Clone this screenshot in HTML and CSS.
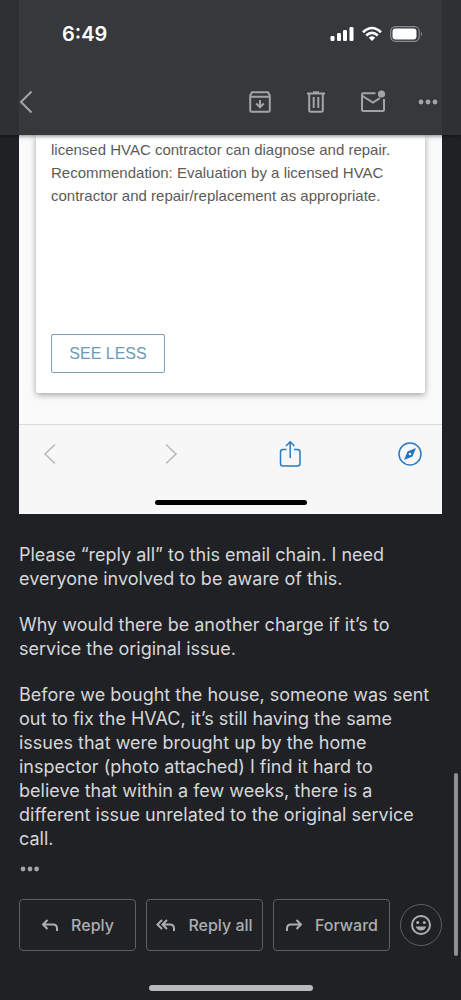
FILE: index.html
```html
<!DOCTYPE html>
<html lang="en">
<head>
<meta charset="utf-8">
<meta name="viewport" content="width=device-width, initial-scale=1">
<title>Email</title>
<link rel="stylesheet" href="styles.css">
</head>
<body>
<header class="top">
  <div class="status">
    <span class="time">6:49</span>
    <div class="signals">
      <svg width="24" height="16" viewBox="0 0 24 16" fill="#fff" aria-hidden="true"><rect x="0.5" y="10" width="4" height="5" rx="1.2"/><rect x="7" y="7" width="4" height="8" rx="1.2"/><rect x="13" y="4" width="4" height="11" rx="1.2"/><rect x="19.500" y="1" width="4" height="14" rx="1.2"/></svg>
      <svg width="20" height="16" viewBox="0 0 20 16" fill="none" stroke="#fff" stroke-width="2.600" aria-hidden="true"><path d="M1 6.200Q10-2.200 19 6.200M4.200 9.500Q10 4.200 15.800 9.500"/><path d="M6.800 11.700Q10 9 13.200 11.700L10 15Z" fill="#fff" stroke="none"/></svg>
      <svg width="33" height="16" viewBox="0 0 33 16" aria-hidden="true"><rect x="0.700" y="0.700" width="28.600" height="14.600" rx="4.700" fill="none" stroke="#8a8b8e" stroke-width="1.200"/><rect x="2.500" y="2.500" width="24" height="11" rx="3" fill="#fff"/><path d="M31 5.500q2 2.500 0 5z" fill="#8a8b8e"/></svg>
    </div>
  </div>
  <nav class="toolbar" aria-label="Message">
    <button class="icon back" aria-label="Back"><svg width="16" height="24" viewBox="0 0 16 24"><path d="M13.500 1.500 3 12l10.500 10.500"/></svg></button>
    <button class="icon" aria-label="Archive"><svg width="24" height="24" viewBox="0 0 24 24"><path d="M2.200 5.500V20.500q0 1.300 1.300 1.300h17q1.300 0 1.300-1.300V5.500L20 2.200H4ZM2.200 6.700h19.600M12 10v7M8.200 13.500l3.800 3.800 3.800-3.800"/></svg></button>
    <button class="icon" aria-label="Delete"><svg width="24" height="24" viewBox="0 0 24 24"><path d="M3 3.500h18M9 2.200h6M5.200 3.500v16.800q0 1.500 1.500 1.500h10.600q1.500 0 1.500-1.500V3.500M9.700 7v11M14.300 7v11"/></svg></button>
    <button class="icon" aria-label="Mark unread"><svg width="26" height="24" viewBox="0 0 26 24"><path d="M15.500 3.200H3.200q-1.200 0-1.200 1.200v15.400q0 1.200 1.200 1.200h19.600q1.200 0 1.200-1.200V9M2.500 6l10.500 6.500 7-4.500"/><circle class="dot" cx="21.500" cy="4" r="3.600"/></svg></button>
    <button class="icon" aria-label="More options"><svg class="dots" width="20" height="24" viewBox="0 0 20 24"><circle cx="3" cy="12" r="2.400"/><circle cx="10" cy="12" r="2.400"/><circle cx="17" cy="12" r="2.400"/></svg></button>
  </nav>
</header>
<main class="message">
  <section class="photo" aria-label="Attached photo">
    <div class="sheet">
      <article class="report">
        <p class="finding">licensed HVAC contractor can diagnose and repair. Recommendation: Evaluation by a licensed HVAC contractor and repair/replacement as appropriate.</p>
        <button class="less">SEE LESS</button>
      </article>
    </div>
    <div class="browser-bar">
      <svg width="26" height="24" viewBox="0 0 26 24" stroke="#b8b8b8"><path d="M18 2.500 8 12l10 9.500"/></svg>
      <svg width="26" height="24" viewBox="0 0 26 24" stroke="#b8b8b8"><path d="M9 2.500 19 12 9 21.500"/></svg>
      <svg width="26" height="28" viewBox="0 0 26 28" stroke="#2b7bc0"><path d="M9.500 9.500h-3.500q-2.500 0-2.500 2.500v11.500q0 2.500 2.500 2.500h14.500q2.500 0 2.500-2.500V12q0-2.500-2.500-2.500h-3.500M13.200 18V2M9 6 13.200 1.800 17.400 6"/></svg>
      <svg width="26" height="26" viewBox="0 0 26 26" stroke="#2b7bc0"><circle cx="13" cy="13" r="11"/><path d="M19 7 15.500 15.500l-8.500 3.500 3.500-8.500Z" fill="#2173c4" stroke="none"/><circle cx="13" cy="13" r="1.300" fill="#f7f7f7" stroke="none"/></svg>
    </div>
    <div class="photo-handle"></div>
  </section>
  <div class="copy">
    <p>Please “reply all” to this email chain. I need everyone involved to be aware of this.</p>
    <p>Why would there be another charge if it’s to service the original issue.</p>
    <p>Before we bought the house, someone was sent out to fix the HVAC, it’s still having the same issues that were brought up by the home inspector (photo attached) I find it hard to believe that within a few weeks, there is a different issue unrelated to the original service call.</p>
  </div>
  <button class="icon quoted" aria-label="Show quoted text"><svg class="dots" width="20" height="8" viewBox="0 0 20 8"><circle cx="4" cy="4" r="2.400"/><circle cx="11" cy="4" r="2.400"/><circle cx="17.600" cy="4" r="2.400"/></svg></button>
  <div class="actions">
    <button class="action"><svg width="18" height="16" viewBox="0 0 18 16"><path d="M6.500 3 2 7.500 6.500 12M2 7.500h10q4 0 4 4V14"/></svg>Reply</button>
    <button class="action"><svg width="20" height="16" viewBox="0 0 20 16"><path d="M6 3 1.500 7.500 6 12M11 3 6.500 7.500 11 12M6.500 7.500H14q4 0 4 4V14"/></svg>Reply all</button>
    <button class="action"><svg width="18" height="16" viewBox="0 0 18 16"><path d="M11.500 3 16 7.500 11.500 12M16 7.500H6q-4 0-4 4V14"/></svg>Forward</button>
    <button class="react" aria-label="Add reaction"><svg width="22" height="22" viewBox="0 0 22 22"><circle cx="11" cy="11" r="9" fill="none" stroke="#adaeb1" stroke-width="2"/><circle cx="7.700" cy="8.500" r="1.500"/><circle cx="14.300" cy="8.500" r="1.500"/><path d="M5.700 12.500h10.600q-1.500 4-5.300 4t-5.300-4z"/></svg></button>
  </div>
</main>
<footer class="home"><div class="home-bar"></div></footer>
<div class="scroll-thumb"></div>
</body>
</html>
```
FILE: styles.css
```css
* { box-sizing: border-box; }
body {
  margin: 0;
  min-height: 100vh;
  position: relative;
  display: flex;
  flex-direction: column;
  background: #202125;
  color: #d6d7d9;
  font-family: Inter, "Liberation Sans", sans-serif;
}
button { margin: 0; padding: 0; background: none; border: 0; font: inherit; color: inherit; }
svg { display: block; flex: none; }
p { margin: 0; }

.top {
  position: relative;
  padding: 22px 23px 21px 18px;
  background: linear-gradient(90deg, #2f3034 19px, #37383c 19px, #37383c calc(100% - 19px), #2f3034 calc(100% - 19px));
  box-shadow: 0 1px 4px rgba(0, 0, 0, .5);
}
.status {
  display: flex;
  justify-content: space-between;
  align-items: center;
  height: 24px;
  padding: 0 15px 0 44px;
}
.time { color: #fff; font-size: 20px; font-weight: 600; line-height: 24px; }
.signals { display: flex; align-items: center; gap: 8px; }
.toolbar { display: flex; align-items: center; gap: 32px; margin-top: 44px; }
.icon svg { fill: none; stroke: #a3a4a8; stroke-width: 2; }
.back { margin-right: auto; }
.icon .dots, .icon .dot { fill: #a3a4a8; stroke: none; }

.message { padding: 0 19px; }
.photo { padding-bottom: 9px; background: #f7f7f7; }
.sheet { padding: 0 17px 31px; background: #fafafa; border-bottom: 1px solid #d9dbda; overflow: hidden; }
.report {
  padding: 3px 15px 20px;
  background: #fff;
  border-radius: 0 0 2px 2px;
  box-shadow: 0 2px 6px rgba(0, 0, 0, .35);
}
.finding { color: #5b5b5b; font-family: "Liberation Sans", Arial, sans-serif; font-size: 15px; line-height: 23px; }
.less {
  margin-top: 127px;
  width: 114px;
  height: 39px;
  border: 1px solid #7d9fb8;
  border-radius: 2px;
  color: #6a9bb8;
  font-family: "Liberation Sans", Arial, sans-serif;
  font-size: 16px;
}
.browser-bar { display: flex; justify-content: space-between; align-items: center; padding: 15px 19px 0 18px; }
.browser-bar svg { fill: none; stroke-width: 1.5; }
.photo-handle { width: 152px; height: 5px; margin: 32px auto 0; border-radius: 3px; background: #000; }

.copy {
  display: flex;
  flex-direction: column;
  gap: 22px;
  margin-top: 29px;
  padding-right: 7px;
  font-size: 18px;
  line-height: 24px;
}
.quoted { display: block; margin-top: 14px; }
.actions { display: flex; align-items: center; gap: 10px; margin-top: 26px; }
.action {
  flex: 1;
  height: 52px;
  display: flex;
  align-items: center;
  justify-content: center;
  gap: 12px;
  border: 1px solid #5e5f63;
  border-radius: 4px;
  color: #adaeb1;
  font-size: 16px;
  font-weight: 500;
  white-space: nowrap;
}
.action svg { fill: none; stroke: #adaeb1; stroke-width: 2; }
.react {
  width: 42px;
  height: 42px;
  display: grid;
  place-items: center;
  border: 1px solid #5e5f63;
  border-radius: 50%;
}
.react svg { fill: #adaeb1; }
.home { margin-top: auto; padding-bottom: 9px; }
.home-bar { width: 164px; height: 6px; margin: 0 auto; border-radius: 3px; background: #b9babb; }
.scroll-thumb { position: absolute; right: 3px; bottom: 44px; width: 4px; height: 183px; border-radius: 2px; background: #8f9093; }
```
